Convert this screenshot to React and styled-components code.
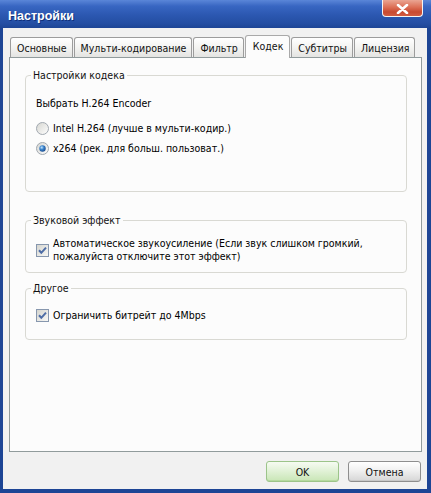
import React, { useId } from "react";
import styled, { createGlobalStyle } from "styled-components";

const GlobalStyle = createGlobalStyle`
  html, body { margin: 0; padding: 0; }
  body {
    width: 431px;
    height: 493px;
    overflow: hidden;
    font-family: "DejaVu Sans Condensed", "Liberation Sans", sans-serif;
    font-size: 10.5px;
    color: #000;
    background: #f1f1f1;
  }
`;

const Window = styled.div`
  width: 431px;
  height: 493px;
  display: flex;
  flex-direction: column;
`;

const TitleBar = styled.div`
  height: 28px;
  flex-shrink: 0;
  display: flex;
  align-items: flex-start;
  padding: 0 8px 0 8px;
  background: linear-gradient(180deg, #5a86d8 0%, #3866c2 22%, #2b57b0 55%, #244ea2 85%, #1d4595 100%);
`;

const Title = styled.div`
  margin-top: 10px;
  color: #fff;
  font-family: "Liberation Sans", sans-serif;
  font-weight: bold;
  font-size: 12.5px;
  line-height: 13px;
  text-shadow: 1px 1px 0 #10307a;
`;

const CloseButton = styled.div`
  margin-left: auto;
  width: 41px;
  height: 17px;
  box-sizing: border-box;
  border: 1px solid #f4f4f4;
  border-top: none;
  border-radius: 0 0 4px 4px;
  background: linear-gradient(180deg, #eaa593 0%, #dc6f56 45%, #c94a30 75%, #d25c42 100%);
  display: flex;
  align-items: center;
  justify-content: center;
  padding-top: 1px;
`;

const Frame = styled.div`
  flex: 1;
  display: flex;
  flex-direction: column;
  background: #f1f1f1;
  border-left: 3px solid #1d4595;
  border-right: 4px solid #1d4595;
  border-bottom: 4px solid #1d4595;
  padding: 7px 5px 7px 6px;
  min-height: 0;
`;

const TabStrip = styled.div`
  height: 22px;
  flex-shrink: 0;
  display: flex;
  align-items: flex-end;
  gap: 1px;
  padding-left: 1px;
  position: relative;
  z-index: 1;
`;

const Tab = styled.div`
  box-sizing: border-box;
  height: ${(p) => (p.$active ? "23px" : "20px")};
  margin-bottom: ${(p) => (p.$active ? "-1px" : "0")};
  padding: ${(p) => (p.$active ? "0 6px 2px 7px" : "0 5px 0 6px")};
  border: 1px solid ${(p) => (p.$active ? "#a9a9a9" : "#9c9c9c")};
  border-bottom: none;
  border-radius: 3px 3px 0 0;
  background: ${(p) =>
    p.$active ? "#fcfcfc" : "linear-gradient(180deg, #ffffff 0%, #f3f3f1 50%, #e4e4e2 100%)"};
  display: flex;
  align-items: center;
  white-space: nowrap;
  position: relative;
  z-index: ${(p) => (p.$active ? 2 : 1)};
  color: #111;
`;

const Panel = styled.div`
  flex: 1;
  min-height: 0;
  box-sizing: border-box;
  border: 1px solid #919b9c;
  background: #fcfcfc;
  padding: 11px 14px 0 15px;
  display: flex;
  flex-direction: column;
`;

const Group = styled.fieldset`
  margin: ${(p) => p.$mt || 0}px 0 0 0;
  padding: 0 10px;
  border: 1px solid #d9d9d3;
  border-radius: 4px;
  min-width: 0;
`;

const Legend = styled.legend`
  margin-left: -5px;
  padding: 0 2px;
  line-height: 13px;
  color: #111;
`;

const GroupBody = styled.div`
  padding-top: ${(p) => p.$top}px;
  padding-bottom: ${(p) => p.$bottom}px;
  display: flex;
  flex-direction: column;
`;

const Caption = styled.div`
  line-height: 13px;
  margin-bottom: 8px;
`;

const OptionRow = styled.label`
  min-height: ${(p) => p.$h || 20}px;
  display: flex;
  align-items: center;
  gap: 4px;
  line-height: 13px;
`;

const BoxIcon = styled.svg`
  flex-shrink: 0;
  display: block;
`;

const Buttons = styled.div`
  flex-shrink: 0;
  display: flex;
  justify-content: flex-end;
  gap: 9px;
  margin-top: 9px;
  padding-right: 1px;
`;

const Button = styled.button`
  width: 73px;
  height: 21px;
  box-sizing: border-box;
  font: inherit;
  color: #111;
  border-radius: 3px;
  border: 1px solid ${(p) => (p.$primary ? "#9cc48a" : "#8e8e8e")};
  background: ${(p) =>
    p.$primary
      ? "linear-gradient(180deg, #f6fbf2 0%, #e2f2d8 45%, #c9e6b6 100%)"
      : "linear-gradient(180deg, #ffffff 0%, #f0f0f0 45%, #d6d6d6 100%)"};
  box-shadow: inset 0 -1px 0 ${(p) => (p.$primary ? "#b5d9a0" : "#c8c8c8")};
  padding: 0;
`;

function Radio({ checked }) {
  const id = useId().replace(/:/g, "");
  return (
    <BoxIcon width="13" height="13" viewBox="0 0 13 13">
      <defs>
        <linearGradient id={`rb${id}`} x1="0" y1="0" x2="1" y2="1">
          <stop offset="0" stopColor="#d5d5d0" />
          <stop offset="1" stopColor="#ffffff" />
        </linearGradient>
        <radialGradient id={`rd${id}`} cx="0.38" cy="0.35" r="0.7">
          <stop offset="0" stopColor="#c4e6ff" />
          <stop offset="0.45" stopColor="#3b84cc" />
          <stop offset="1" stopColor="#1a4a8e" />
        </radialGradient>
      </defs>
      <circle cx="6.5" cy="6.5" r="6" fill={`url(#rb${id})`} stroke="#a1a8b0" />
      {checked && <circle cx="6.5" cy="6.5" r="3.2" fill={`url(#rd${id})`} />}
    </BoxIcon>
  );
}

function Check() {
  const id = useId().replace(/:/g, "");
  return (
    <BoxIcon width="13" height="13" viewBox="0 0 13 13">
      <defs>
        <linearGradient id={`cb${id}`} x1="0" y1="0" x2="1" y2="1">
          <stop offset="0" stopColor="#d3d3cd" />
          <stop offset="1" stopColor="#fafaf8" />
        </linearGradient>
      </defs>
      <rect x="0.5" y="0.5" width="12" height="12" fill={`url(#cb${id})`} stroke="#8797ae" />
      <path d="M3 6.3 L5.3 8.8 L10 3.6" fill="none" stroke="#4d6ca6" strokeWidth="2" />
    </BoxIcon>
  );
}

const tabs = ["Основные", "Мульти-кодирование", "Фильтр", "Кодек", "Субтитры", "Лицензия"];

export default function App() {
  return (
    <>
      <GlobalStyle />
      <Window>
        <TitleBar>
          <Title>Настройки</Title>
          <CloseButton>
            <svg width="13" height="10" viewBox="0 0 13 10">
              <path d="M2 1 L11 9 M11 1 L2 9" stroke="#fff" strokeWidth="2.6" strokeLinecap="round" />
            </svg>
          </CloseButton>
        </TitleBar>
        <Frame>
          <TabStrip>
            {tabs.map((t) => (
              <Tab key={t} $active={t === "Кодек"}>
                {t}
              </Tab>
            ))}
          </TabStrip>
          <Panel>
            <Group>
              <Legend>Настройки кодека</Legend>
              <GroupBody $top={15} $bottom={33}>
                <Caption>Выбрать H.264 Encoder</Caption>
                <OptionRow>
                  <Radio />
                  Intel H.264 (лучше в мульти-кодир.)
                </OptionRow>
                <OptionRow>
                  <Radio checked />
                  x264 (рек. для больш. пользоват.)
                </OptionRow>
              </GroupBody>
            </Group>
            <Group $mt={22}>
              <Legend>Звуковой эффект</Legend>
              <GroupBody $top={10} $bottom={9}>
                <OptionRow $h={26}>
                  <Check />
                  <span>
                    Автоматическое звукоусиление (Если звук слишком громкий, пожалуйста отключите этот эффект)
                  </span>
                </OptionRow>
              </GroupBody>
            </Group>
            <Group $mt={9}>
              <Legend>Другое</Legend>
              <GroupBody $top={13} $bottom={17}>
                <OptionRow $h={14}>
                  <Check />
                  Ограничить битрейт до 4Mbps
                </OptionRow>
              </GroupBody>
            </Group>
          </Panel>
          <Buttons>
            <Button $primary>OK</Button>
            <Button>Отмена</Button>
          </Buttons>
        </Frame>
      </Window>
    </>
  );
}
